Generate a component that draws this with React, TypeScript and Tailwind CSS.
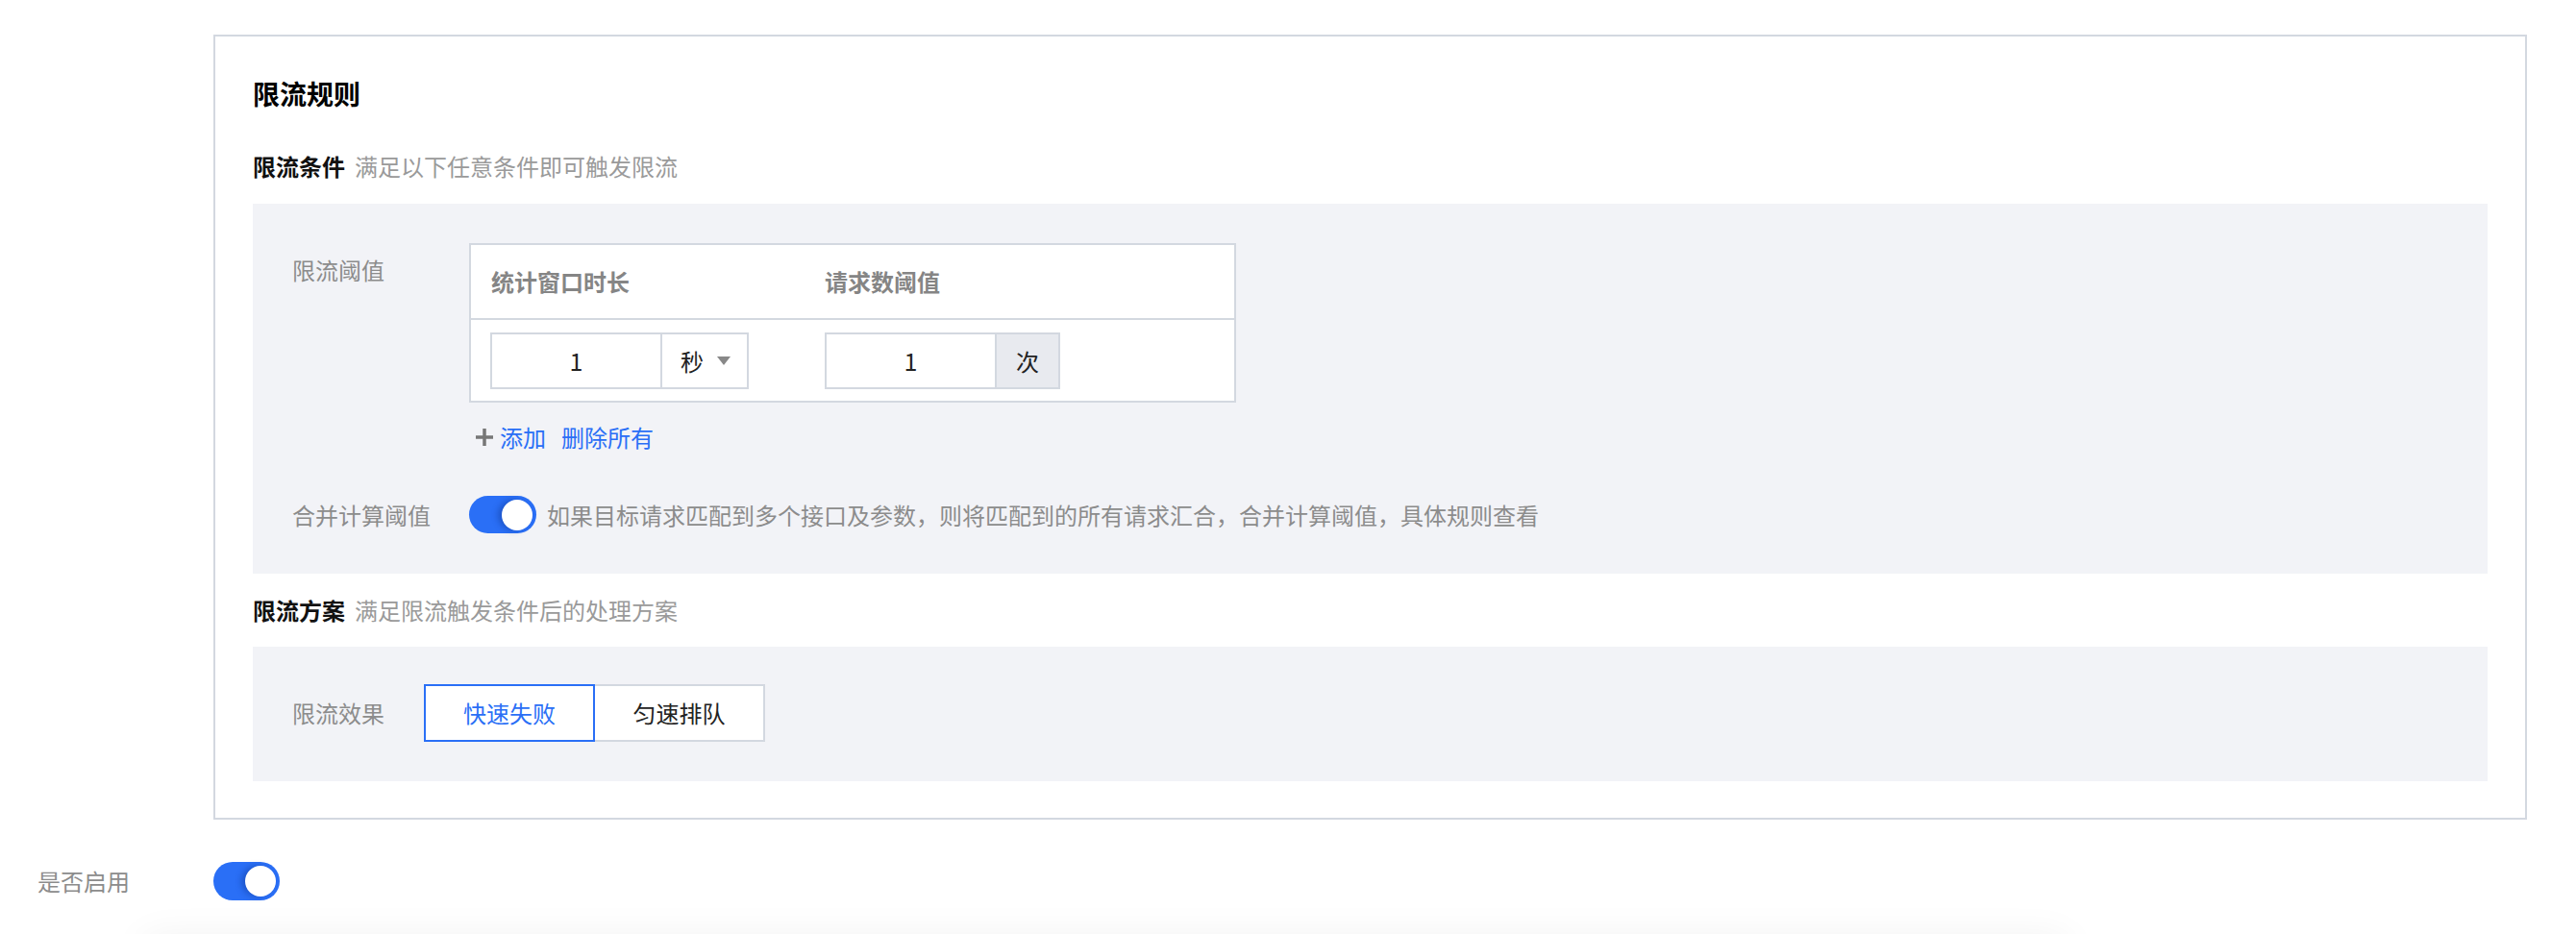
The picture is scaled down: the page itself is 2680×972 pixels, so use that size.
import React from 'react';

function Toggle({ className }: { className?: string }) {
  return (
    <div className={`flex items-center justify-end rounded-full bg-[#2a6ff6] pr-[4px] ${className ?? ''}`}>
      <div className="h-[32px] w-[32px] rounded-full bg-white shadow-[-4px_0_6px_rgba(10,40,120,0.35)]" />
    </div>
  );
}

function SectionTitle({ title, desc }: { title: string; desc: string }) {
  return (
    <div className="flex h-[36px] items-center text-[24px] leading-[36px]">
      <span className="font-bold text-[#111]">{title}</span>
      <span className="ml-[10px] text-[#9a9a9a]">{desc}</span>
    </div>
  );
}

export default function App() {
  return (
    <div className="relative h-[972px] w-full overflow-hidden bg-white font-['Noto_Sans_CJK_SC','Noto_Sans',sans-serif] text-[24px] text-[#222]">
      <div className="ml-[222px] mt-[36px] w-[2407px] border-2 border-[#d3d8e0] px-[39px] pb-[38px] pt-[39px]">
        <div className="h-[40px] text-[28px] font-bold leading-[40px] text-black">限流规则</div>

        <div className="mt-[38px]">
          <SectionTitle title="限流条件" desc="满足以下任意条件即可触发限流" />
        </div>

        {/* 条件 */}
        <div className="mt-[21px] bg-[#f2f3f7] pb-[42px] pl-[41px] pt-[41px]">
          <div className="flex">
            <div className="w-[184px] pt-[10px] leading-[36px] text-[#8c8c8c]">限流阈值</div>
            <div>
              <div className="w-[798px] border-2 border-[#d3d8e0] bg-white">
                <div className="flex h-[78px] items-center border-b-2 border-[#d3d8e0] pl-[21px] font-bold text-[#858585]">
                  <span className="w-[347px]">统计窗口时长</span>
                  <span>请求数阈值</span>
                </div>
                <div className="flex pb-[12px] pl-[20px] pt-[13px]">
                  <div className="flex h-[59px] w-[269px] border-2 border-[#d3d8e0] bg-white">
                    <div className="flex flex-1 items-center justify-center text-[25px]">1</div>
                    <div className="flex w-[90px] items-center border-l-2 border-[#d3d8e0] pl-[19px]">
                      <span>秒</span>
                      <svg className="ml-[14px]" width="14" height="9" viewBox="0 0 14 9">
                        <path d="M0 0 L14 0 L7 9 Z" fill="#888" />
                      </svg>
                    </div>
                  </div>
                  <div className="ml-[79px] flex h-[59px] w-[245px] border-2 border-[#d3d8e0] bg-white">
                    <div className="flex flex-1 items-center justify-center text-[25px]">1</div>
                    <div className="flex w-[66px] items-center justify-center border-l-2 border-[#d3d8e0] bg-[#e8eaef]">次</div>
                  </div>
                </div>
              </div>

              <div className="mt-[18px] flex h-[36px] items-center pl-[6px] text-[#2a6ff6]">
                <svg width="20" height="20" viewBox="0 0 20 20">
                  <path d="M10 1 V19 M1 10 H19" stroke="#777" strokeWidth="3.5" />
                </svg>
                <span className="ml-[6px]">添加</span>
                <span className="ml-[16px]">删除所有</span>
              </div>
            </div>
          </div>

          <div className="mt-[43px] flex h-[39px] items-center">
            <div className="w-[184px] text-[#8c8c8c]">合并计算阈值</div>
            <Toggle className="h-[39px] w-[70px]" />
            <span className="ml-[11px] text-[#8c8c8c]">
              如果目标请求匹配到多个接口及参数，则将匹配到的所有请求汇合，合并计算阈值，具体规则查看
            </span>
          </div>
        </div>

        <div className="mt-[20px]">
          <SectionTitle title="限流方案" desc="满足限流触发条件后的处理方案" />
        </div>

        {/* 方案 */}
        <div className="mt-[20px] flex items-center bg-[#f2f3f7] pb-[41px] pl-[41px] pt-[39px]">
          <div className="w-[137px] text-[#8c8c8c]">限流效果</div>
          <div className="flex h-[60px]">
            <button className="w-[178px] border-2 border-[#2a6ff6] bg-white text-[#2a6ff6]">快速失败</button>
            <button className="w-[177px] border-2 border-l-0 border-[#d3d8e0] bg-white text-[#222]">匀速排队</button>
          </div>
        </div>
      </div>

      <div className="mt-[44px] flex h-[40px] items-center">
        <div className="w-[222px] pl-[39px] text-[#8c8c8c]">是否启用</div>
        <Toggle className="h-[40px] w-[69px]" />
      </div>

      <div className="ml-[150px] mt-[38px] h-[60px] w-[2000px] bg-white shadow-[0_0_40px_rgba(0,0,0,0.06)]" />
    </div>
  );
}
